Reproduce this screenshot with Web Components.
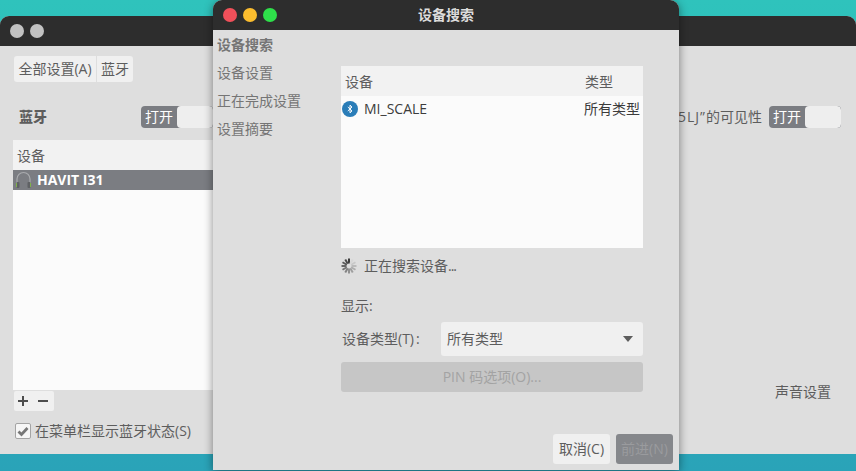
<!DOCTYPE html>
<html lang="zh">
<head>
<meta charset="utf-8">
<title>蓝牙</title>
<style>
html, body { margin: 0; height: 100%; overflow: hidden; }
body {
  position: relative;
  background: linear-gradient(180deg, #2fc3bc 0%, #2bb0b9 60%, #2aa3b8 100%);
  font: 14px/20px "Open Sans", "Noto Sans CJK SC", sans-serif;
  color: #5d5d5d;
}
</style>
</head>
<body>

<template id="window-tpl">
  <style>
    :host { display: flex; flex-direction: column; position: absolute; background: #dedede; border-radius: 9px 9px 0 0; overflow: hidden; }
    header { flex: none; height: 30px; display: flex; align-items: center; background: #2d2d2d; color: #dcdcdc; font-weight: 700; font-size: 14px; position: relative; }
    .lights { display: flex; gap: 6px; padding-left: 10px; }
    .title { position: absolute; left: 0; right: 0; text-align: center; }
    ::slotted([slot=light]) { display: block; width: 14px; height: 14px; border-radius: 50%; }
    main { flex: 1; min-height: 0; display: flex; flex-direction: column; }
  </style>
  <header>
    <div class="lights"><slot name="light"></slot></div>
    <div class="title"></div>
  </header>
  <main><slot></slot></main>
</template>

<template id="switch-tpl">
  <style>
    :host { display: inline-flex; width: 72px; height: 22px; border-radius: 4px; overflow: hidden; background: #7b7d82; font-size: 14px; font-weight: 400; line-height: 22px; flex: none; }
    span { width: 36px; color: #fff; text-align: center; }
    i { flex: 1; background: #eeeeee; border-radius: 4px; }
  </style>
  <span>打开</span><i></i>
</template>

<template id="button-tpl">
  <style>
    :host { display: inline-flex; align-items: center; justify-content: center; box-sizing: border-box; height: 30px; border-radius: 3px; background: #f0f0f0; color: #5d5d5d; white-space: nowrap; }
    :host([primary]) { background: #85878b; color: #9a9b9e; }
    :host([off]) { background: #c6c6c6; color: #a3a3a3; }
  </style>
  <slot></slot>
</template>

<template id="settings-tpl">
  <style>
    :host { display: flex; flex: 1; min-height: 0; }
    .left { width: 330px; flex: none; padding: 10px 0 0 13px; box-sizing: border-box; display: flex; flex-direction: column; }
    .crumbs { display: flex; gap: 1px; margin-left: 1px; }
    .crumbs x-button { height: 26px; }
    .crumbs x-button:first-child { width: 82px; border-radius: 3px 0 0 3px; }
    .crumbs x-button:last-child { width: 36px; border-radius: 0 3px 3px 0; }
    .bt { display: flex; align-items: center; height: 22px; margin-top: 24px; padding-left: 6px; font-weight: 700; }
    .bt b { width: 122px; }
    .list { margin-top: 12px; height: 250px; background: #fbfbfb; width: 260px; display: flex; flex-direction: column; }
    .head { height: 30px; line-height: 32px; padding-left: 4px; background: #f2f2f2; }
    .row { height: 20px; background: #7b7d82; color: #fff; font-weight: 700; display: flex; align-items: center; gap: 5px; padding-left: 2px; line-height: 20px; }
    .tools { display: flex; width: 40px; height: 20px; margin: 1px 0 0 1px; background: #f0f0f0; border-radius: 2px; gap: 8px; align-items: center; padding: 0 3px; box-sizing: border-box; }
    .check { display: flex; align-items: center; gap: 4px; margin: 10px 0 0 2px; }
    .box { width: 16px; height: 16px; box-sizing: border-box; border: 1px solid #a4a4a4; border-radius: 2px; background: #f6f6f6; display: flex; align-items: center; justify-content: center; }
    .right { flex: 1; min-width: 0; display: flex; flex-direction: column; align-items: flex-end; padding: 60px 15px 0 0; }
    .vis { display: flex; align-items: center; gap: 7px; height: 22px; white-space: nowrap; }
    .vis em { font-style: normal; letter-spacing: 1px; }
    .sound { margin-top: auto; margin-bottom: 52px; padding-right: 10px; }
  </style>
  <div class="left">
    <div class="crumbs"><x-button>全部设置(A)</x-button><x-button>蓝牙</x-button></div>
    <div class="bt"><b>蓝牙</b><x-switch></x-switch></div>
    <div class="list">
      <div class="head">设备</div>
      <div class="row">
        <svg width="17" height="20" viewBox="0 0 17 20"><path d="M2 14V9a6.500 6.500 0 0 1 13 0v5" fill="none" stroke="#a9abae" stroke-width="1.200"/><rect x="1.500" y="12" width="3" height="6" rx="1" fill="#5f6164"/><rect x="12.500" y="12" width="3" height="6" rx="1" fill="#5f6164"/><path d="M1.500 13v4" stroke="#7fb24a" stroke-width="1"/><path d="M15.500 13v4" stroke="#7fb24a" stroke-width="1"/></svg>
        HAVIT I31
      </div>
    </div>
    <div class="tools">
      <svg width="12" height="12" viewBox="0 0 12 12"><path d="M6 1v10M1 6h10" stroke="#4d4d4d" stroke-width="2"/></svg>
      <svg width="12" height="12" viewBox="0 0 12 12"><path d="M1 6h10" stroke="#4d4d4d" stroke-width="2"/></svg>
    </div>
    <div class="check">
      <span class="box"><svg width="12" height="12" viewBox="0 0 12 12"><path d="M1.500 6.500L4.500 9.500L10.500 3" fill="none" stroke="#777" stroke-width="2.800"/></svg></span>
      在菜单栏显示蓝牙状态(S)
    </div>
  </div>
  <div class="right">
    <div class="vis"><span><em>5LJ”</em>的可见性</span><x-switch></x-switch></div>
    <div class="sound">声音设置</div>
  </div>
</template>

<template id="assistant-tpl">
  <style>
    :host { display: flex; flex-direction: column; flex: 1; min-height: 0; }
    .top { flex: 1; display: flex; min-height: 0; }
    nav { width: 128px; flex: none; box-sizing: border-box; padding: 5px 0 0 4px; color: #757575; display: flex; flex-direction: column; gap: 8px; white-space: nowrap; }
    nav b { font-weight: 700; }
    .body { width: 302px; flex: none; padding-top: 36px; display: flex; flex-direction: column; }
    .tree { height: 182px; background: #fbfbfb; }
    .thead { height: 30px; background: #f2f2f2; display: flex; justify-content: space-between; line-height: 32px; padding: 0 30px 0 4px; }
    .trow { display: flex; align-items: center; height: 26px; color: #3c3c3c; padding: 0 3px 0 1px; }
    .trow svg { margin-right: 6px; }
    .trow span:last-child { margin-left: auto; }
    .status { display: flex; align-items: center; gap: 7px; height: 20px; margin-top: 8px; }
    .dots { letter-spacing: -1px; }
    .show { margin-top: 20px; height: 20px; }
    .type { display: flex; align-items: center; margin-top: 6px; height: 34px; }
    .type label { width: 100px; padding-left: 1px; box-sizing: border-box; }
    .type label em { font-style: normal; margin-left: 2px; }
    .combo { flex: 1; height: 34px; background: #f0f0f0; border-radius: 3px; display: flex; align-items: center; justify-content: space-between; padding: 0 10px 0 6px; }
    .combo i { width: 0; height: 0; border: 5px solid transparent; border-top: 6px solid #5d5d5d; border-bottom: 0; }
    .pin { margin-top: 6px; }
    footer { flex: none; display: flex; justify-content: flex-end; gap: 6px; padding: 0 6px 6px 0; }
    footer x-button { width: 57px; }
  </style>
  <div class="top">
    <nav><b>设备搜索</b><span>设备设置</span><span>正在完成设置</span><span>设置摘要</span></nav>
    <div class="body">
      <div class="tree">
        <div class="thead"><span>设备</span><span>类型</span></div>
        <div class="trow">
          <svg width="16" height="16" viewBox="0 0 16 16"><circle cx="8" cy="8" r="8" fill="#2a7db8"/><path d="M5.800 6L10 9.900 8 11.800V4.200L10 6.100 5.800 10" fill="none" stroke="#fff" stroke-width="1"/></svg>
          <span>MI_SCALE</span><span>所有类型</span>
        </div>
      </div>
      <div class="status"><x-spinner></x-spinner><span>正在搜索设备<span class="dots">...</span></span></div>
      <div class="show">显示:</div>
      <div class="type">
        <label>设备类型(T)<em>:</em></label>
        <div class="combo"><span>所有类型</span><i></i></div>
      </div>
      <x-button class="pin" off>PIN 码选项(O)...</x-button>
    </div>
  </div>
  <footer><x-button>取消(C)</x-button><x-button primary>前进(N)</x-button></footer>
</template>

<x-window id="back" style="left:0;top:16px;width:856px;height:438px">
  <i slot="light" style="background:#c2c2c2"></i>
  <i slot="light" style="background:#c2c2c2"></i>
  <x-settings></x-settings>
</x-window>

<x-window id="front" title="设备搜索" style="left:213px;top:0;width:466px;height:470px;box-shadow:0 2px 10px rgba(0,0,0,.45)">
  <i slot="light" style="background:#f1505a"></i>
  <i slot="light" style="background:#fbbd2e"></i>
  <i slot="light" style="background:#2ee04a"></i>
  <x-assistant></x-assistant>
</x-window>

<script>
function fromTemplate(el, id) {
  const root = el.attachShadow({ mode: 'open' });
  root.appendChild(document.getElementById(id).content.cloneNode(true));
  return root;
}

class XWindow extends HTMLElement {
  connectedCallback() {
    const root = fromTemplate(this, 'window-tpl');
    root.querySelector('.title').textContent = this.getAttribute('title') || '';
    this.removeAttribute('title');
  }
}
class XSwitch extends HTMLElement {
  connectedCallback() { fromTemplate(this, 'switch-tpl'); }
}
class XButton extends HTMLElement {
  connectedCallback() { fromTemplate(this, 'button-tpl'); }
}
class XSettings extends HTMLElement {
  connectedCallback() { fromTemplate(this, 'settings-tpl'); }
}
class XAssistant extends HTMLElement {
  connectedCallback() { fromTemplate(this, 'assistant-tpl'); }
}
// the busy spinner, 12 spokes, darkest at the top and fading anticlockwise
class XSpinner extends HTMLElement {
  connectedCallback() {
    const root = this.attachShadow({ mode: 'open' });
    let spokes = '';
    for (let i = 0; i < 12; i++) {
      const grey = 60 + i * 14;
      spokes += `<rect x="7" y="0.5" width="2" height="5" fill="rgb(${grey},${grey},${grey})" transform="rotate(${-i * 30} 8 8)"/>`;
    }
    root.innerHTML = `<style>:host { display: block; width: 16px; height: 16px; flex: none; }</style>
      <svg width="16" height="16" viewBox="0 0 16 16">${spokes}</svg>`;
  }
}

customElements.define('x-switch', XSwitch);
customElements.define('x-button', XButton);
customElements.define('x-spinner', XSpinner);
customElements.define('x-settings', XSettings);
customElements.define('x-assistant', XAssistant);
customElements.define('x-window', XWindow);
</script>
</body>
</html>
